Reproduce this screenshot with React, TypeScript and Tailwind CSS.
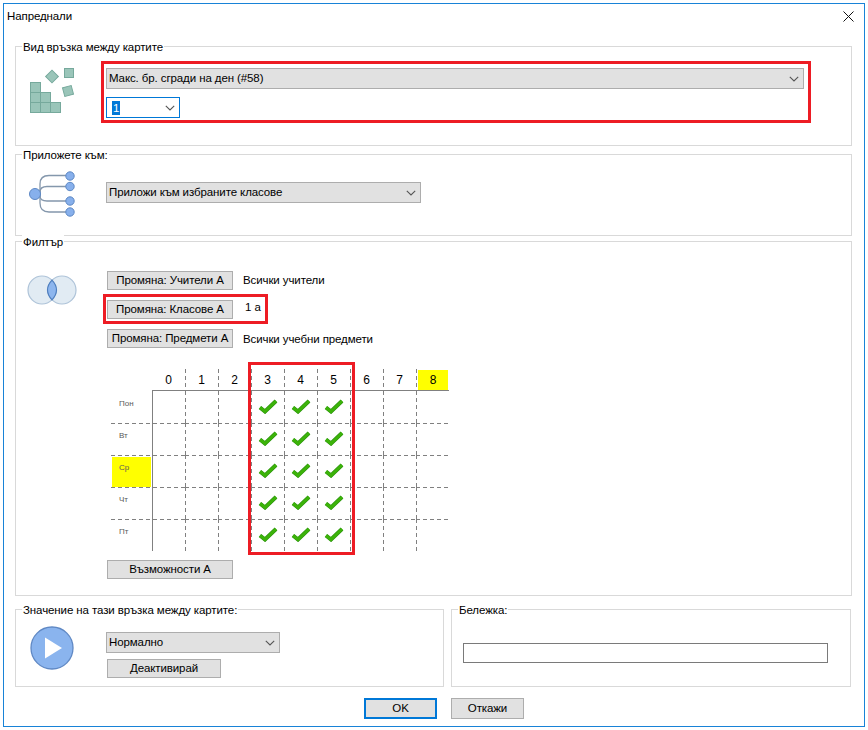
import React from "react";

const fontStyle = "font-['Liberation_Sans',_Arial,_sans-serif] text-[11.5px] tracking-[-0.1px]";

function Chevron() {
  return (
    <svg width="10" height="6" viewBox="0 0 10 6" className="flex-none">
      <path d="M0.8 0.8 L5 5 L9.2 0.8" fill="none" stroke="#555" strokeWidth="1.1" />
    </svg>
  );
}

function Select({ w, text }: { w: string; text: string }) {
  return (
    <div className={`${w} h-[21px] flex items-center justify-between bg-[#e1e1e1] border border-[#adadad] pl-[2px] pr-[4px] text-black`}>
      <span className="pt-px">{text}</span>
      <Chevron />
    </div>
  );
}

function Btn({ w, children, className = "" }: { w: string; children: React.ReactNode; className?: string }) {
  return (
    <div className={`${w} h-[19px] flex-none flex items-center justify-center whitespace-nowrap bg-[#e1e1e1] border border-[#adadad] pt-px text-black ${className}`}>
      {children}
    </div>
  );
}

function Legend({ children }: { children: React.ReactNode }) {
  return (
    <span className="absolute left-[6px] -top-[8px] bg-white px-[1px] leading-[16px] text-black whitespace-nowrap">
      {children}
    </span>
  );
}

function RedBox({ className }: { className: string }) {
  return <div className={`absolute border-[3px] border-[#ed1c24] ${className}`} />;
}

function BlocksIcon() {
  const cells = [
    [30, 82], [30, 92], [30, 102], [40, 92], [40, 102], [50, 102],
  ];
  return (
    <svg width="70" height="52" viewBox="26 64 70 52" className="block">
      <g fill="#9ac5b9" stroke="#76a99c" strokeWidth="1">
        {cells.map(([x, y]) => (
          <rect key={`${x}-${y}`} x={x + 0.5} y={y + 0.5} width="10" height="10" />
        ))}
        <rect x="47.5" y="72" width="9" height="9" transform="rotate(45 52 76.5)" />
        <rect x="64.5" y="68.5" width="9" height="9" />
        <rect x="63.5" y="86.5" width="9" height="9" transform="rotate(-15 68 91)" />
      </g>
    </svg>
  );
}

function TreeIcon() {
  return (
    <svg width="70" height="50" viewBox="26 170 70 50" className="block">
      <g fill="none" stroke="#8497ac" strokeWidth="1.3">
        <path d="M35 194 H40 V184 Q40 175.5 49 175.5 H70" />
        <path d="M40 194 V192 Q40 186.5 47 186.5 H70" />
        <path d="M40 194 V196 Q40 201 47 201 H70" />
        <path d="M40 194 V203 Q40 212 49 212 H70" />
      </g>
      <g fill="#87b0ec" stroke="#5d88c4" strokeWidth="1">
        <circle cx="35" cy="194" r="5.5" />
        <circle cx="70" cy="176" r="4.2" />
        <circle cx="70" cy="186.5" r="4.2" />
        <circle cx="70" cy="201" r="4.2" />
        <circle cx="70" cy="212" r="4.2" />
      </g>
    </svg>
  );
}

function VennIcon() {
  return (
    <svg width="70" height="36" viewBox="26 272 70 36" className="block">
      <g fill="#e1ebf3" stroke="#aec3d8" strokeWidth="1.2">
        <circle cx="42" cy="290" r="14" />
        <circle cx="62" cy="290" r="14" />
      </g>
      <path d="M52 280.2 Q56.5 285 56.5 290 Q56.5 295 52 299.8 Q47.5 295 47.5 290 Q47.5 285 52 280.2 Z" fill="#8db6ee" stroke="#4f7fbf" strokeWidth="1.2" />
    </svg>
  );
}

function PlayIcon() {
  return (
    <svg width="70" height="52" viewBox="26 622 70 52" className="block">
      <circle cx="52" cy="648" r="21" fill="#8ab4ee" stroke="#5f88c4" strokeWidth="1.3" />
      <path d="M45 637.5 L62 648 L45 658.5 Z" fill="#fff" />
    </svg>
  );
}

function Check() {
  return (
    <svg width="20" height="15" viewBox="0 0 20 15" className="block mb-px">
      <path d="M2 8.5 L7 12.5 L18 2" fill="none" stroke="#2a8f10" strokeWidth="4" />
      <path d="M2 8.5 L7 12.5 L18 2" fill="none" stroke="#3cb309" strokeWidth="3" />
    </svg>
  );
}

function DashH() {
  return <span className="absolute left-0 top-0 w-full h-px bg-[repeating-linear-gradient(90deg,#808080_0_4px,transparent_4px_7px)]" />;
}
function DashV() {
  return <span className="absolute left-0 top-0 h-full w-px bg-[repeating-linear-gradient(180deg,#808080_0_4px,transparent_4px_7px)]" />;
}

const hours = [0, 1, 2, 3, 4, 5, 6, 7, 8];
const days = ["Пон", "Вт", "Ср", "Чт", "Пт"];

function Timetable() {
  return (
    <div className="ml-[5px] mt-[21px] grid grid-cols-[41px_repeat(9,33px)] grid-rows-[22px_repeat(5,32px)] w-[338px] h-[182px]">
      <div />
      {hours.map((h) => (
        <div key={h} className="relative border-b border-[#808080] text-[12px] text-black">
          {h > 0 && <DashV />}
          {h === 8 ? (
            <div className="h-[20px] mt-px ml-[2px] mr-px bg-[#ffff00] flex items-center justify-center">{h}</div>
          ) : (
            <div className="h-[21px] flex items-center justify-center">{h}</div>
          )}
        </div>
      ))}
      {days.map((d, r) => (
        <React.Fragment key={d}>
          <div className="relative text-[8px] leading-[10px] tracking-normal text-[#5a5a5a]">
            {r > 0 && <DashH />}
            {d === "Ср" ? (
              <div className="h-[30px] mt-[2px] mx-px pl-[7px] pt-[6px] bg-[#ffff00]">{d}</div>
            ) : (
              <div className="pl-[8px] pt-[8px]">{d}</div>
            )}
          </div>
          {hours.map((h) => (
            <div key={h} className={`relative flex items-center justify-center ${h === 0 ? "border-l border-[#808080]" : ""}`}>
              {r > 0 && <DashH />}
              {h > 0 && <DashV />}
              {h >= 3 && h <= 5 && <Check />}
            </div>
          ))}
        </React.Fragment>
      ))}
    </div>
  );
}

export default function App() {
  return (
    <div className={`w-[868px] h-[730px] bg-white p-[3px] ${fontStyle}`}>
      <div className="h-[724px] border border-[#1883d7] bg-white flex flex-col">
        <div className="h-[42px] flex-none flex items-start justify-between pl-[3px] pr-[10px] pt-[4px]">
          <span className="leading-[16px] text-black">Напреднали</span>
          <svg width="11" height="11" viewBox="0 0 11 11" className="mt-[3px]">
            <path d="M0.5 0.5 L10.5 10.5 M10.5 0.5 L0.5 10.5" stroke="#111" strokeWidth="1" />
          </svg>
        </div>

        <div className="pl-[11px] pr-[12px] flex flex-col">
          <div className="relative h-[100px] border border-[#d9d9d9] flex pt-[17px]">
            <Legend>Вид връзка между картите</Legend>
            <div className="w-[90px] flex-none pl-[10px]"><BlocksIcon /></div>
            <div className="flex flex-col gap-[8px] pt-[4px]">
              <Select w="w-[698px]" text="Макс. бр. сгради на ден (#58)" />
              <div className="w-[74px] h-[21px] flex items-center justify-between bg-white border border-[#0078d7] pl-[5px] pr-[4px]">
                <span className="bg-[#0078d7] text-white leading-[14px] px-px">1</span>
                <Chevron />
              </div>
            </div>
            <RedBox className="left-[85px] top-[14px] w-[710px] h-[62px]" />
          </div>

          <div className="relative mt-[8px] h-[82px] border border-[#d9d9d9] flex">
            <Legend>Приложете към:</Legend>
            <div className="w-[90px] flex-none pl-[10px] pt-[15px]"><TreeIcon /></div>
            <div className="pt-[27px]">
              <Select w="w-[315px]" text="Приложи към избраните класове" />
            </div>
          </div>

          <div className="relative mt-[5px] h-[355px] border border-[#d9d9d9] flex">
            <Legend>Филтър</Legend>
            <div className="w-[90px] flex-none pl-[10px] pt-[30px]"><VennIcon /></div>
            <div className="pt-[29px] flex flex-col">
              <div className="ml-px flex flex-col gap-[10px]">
                <div className="h-[19px] flex items-center gap-[10px] text-black">
                  <Btn w="w-[126px]">Промяна: Учители А</Btn>
                  <span>Всички учители</span>
                </div>
                <div className="h-[19px] flex items-center gap-[12px] text-black">
                  <Btn w="w-[126px]">Промяна: Класове А</Btn>
                  <span className="-mt-[4px]">1 а</span>
                </div>
                <div className="h-[19px] flex items-center gap-[10px] text-black">
                  <Btn w="w-[126px]">Промяна: Предмети А</Btn>
                  <span className="mt-[3px]">Всички учебни предмети</span>
                </div>
              </div>
              <Timetable />
              <Btn w="w-[126px]" className="ml-px mt-[9px]">Възможности А</Btn>
            </div>
            <RedBox className="left-[87px] top-[52px] w-[165px] h-[30px]" />
            <RedBox className="left-[232px] top-[120px] w-[107px] h-[193px]" />
          </div>

          <div className="mt-[13px] flex gap-[7px]">
            <div className="relative w-[429px] h-[78px] border border-[#d9d9d9] flex">
              <Legend>Значение на тази връзка между картите:</Legend>
              <div className="w-[90px] flex-none pl-[10px] pt-[12px]"><PlayIcon /></div>
              <div className="pt-[22px] flex flex-col gap-[6px]">
                <Select w="w-[174px]" text="Нормално" />
                <Btn w="w-[114px]" className="ml-px">Деактивирай</Btn>
              </div>
            </div>
            <div className="relative w-[400px] h-[78px] border border-[#d9d9d9] pl-[11px] pt-[33px]">
              <Legend>Бележка:</Legend>
              <div className="w-[365px] h-[20px] border border-[#7a7a7a] bg-white" />
            </div>
          </div>
        </div>

        <div className="mt-[11px] pl-[360px] flex gap-[14px]">
          <div className="w-[73px] h-[21px] flex items-center justify-center bg-[#e1e1e1] border-2 border-[#0078d7] pt-px text-black">OK</div>
          <div className="w-[73px] h-[21px] flex items-center justify-center bg-[#e1e1e1] border border-[#adadad] pt-px text-black">Откажи</div>
        </div>
      </div>
    </div>
  );
}
